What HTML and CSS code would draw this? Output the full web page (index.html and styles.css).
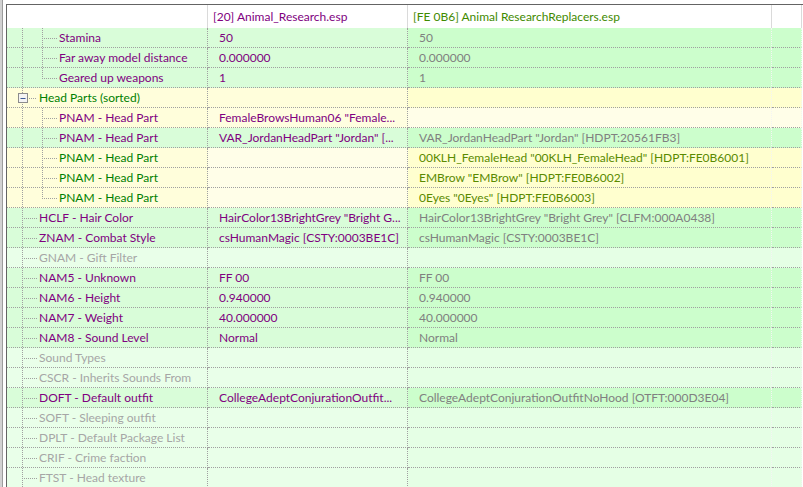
FILE: index.html
```html
<!DOCTYPE html>
<html lang="en">
<head>
<meta charset="UTF-8" />
<title>Record View</title>
<link rel="stylesheet" href="styles.css">
</head>
<body>
<!-- tree guide shapes -->
<svg class="defs" width="0" height="0">
  <symbol id="mid2" viewBox="0 0 52 20">
    <line x1="15.5" y1="0" x2="15.5" y2="20" />
    <line x1="35.5" y1="0" x2="35.5" y2="20" />
    <line x1="37" y1="10.5" x2="50" y2="10.5" />
  </symbol>
  <symbol id="end2" viewBox="0 0 52 20">
    <line x1="15.5" y1="0" x2="15.5" y2="20" />
    <line x1="35.5" y1="0" x2="35.5" y2="11" />
    <line x1="37" y1="10.5" x2="50" y2="10.5" />
  </symbol>
  <symbol id="mid1" viewBox="0 0 32 20">
    <line x1="15.5" y1="0" x2="15.5" y2="20" />
    <line x1="17" y1="10.5" x2="30" y2="10.5" />
  </symbol>
  <symbol id="open1" viewBox="0 0 32 20">
    <line x1="15.5" y1="0" x2="15.5" y2="20" />
    <line x1="22" y1="10.5" x2="30" y2="10.5" />
    <rect x="11.5" y="5.5" width="9" height="9" class="box" />
    <line x1="13.5" y1="10.5" x2="18.5" y2="10.5" class="minus" />
  </symbol>
</svg>

<div class="window">
  <div class="gutter"></div>
  <div class="view">
    <div class="row header">
      <div class="cell"></div>
      <div class="cell hd hd-master">[20] Animal_Research.esp</div>
      <div class="cell hd hd-over">[FE 0B6] Animal ResearchReplacers.esp</div>
      <div class="cell"></div>
    </div>

    <div class="row green">
      <div class="cell name purple"><svg class="tree t2"><use href="#mid2"/></svg>Stamina</div>
      <div class="cell val purple">50</div>
      <div class="cell val gray">50</div>
      <div class="cell"></div>
    </div>
    <div class="row green">
      <div class="cell name purple"><svg class="tree t2"><use href="#mid2"/></svg>Far away model distance</div>
      <div class="cell val purple">0.000000</div>
      <div class="cell val gray">0.000000</div>
      <div class="cell"></div>
    </div>
    <div class="row green">
      <div class="cell name purple"><svg class="tree t2"><use href="#end2"/></svg>Geared up weapons</div>
      <div class="cell val purple">1</div>
      <div class="cell val gray">1</div>
      <div class="cell"></div>
    </div>

    <div class="row yellow">
      <div class="cell name green-text"><svg class="tree t1"><use href="#open1"/></svg>Head Parts (sorted)</div>
      <div class="cell val"></div>
      <div class="cell val"></div>
      <div class="cell"></div>
    </div>
    <div class="row yellow-first">
      <div class="cell name purple"><svg class="tree t2"><use href="#mid2"/></svg>PNAM - Head Part</div>
      <div class="cell val purple">FemaleBrowsHuman06 "Female...</div>
      <div class="cell val"></div>
      <div class="cell"></div>
    </div>
    <div class="row green">
      <div class="cell name purple"><svg class="tree t2"><use href="#mid2"/></svg>PNAM - Head Part</div>
      <div class="cell val purple">VAR_JordanHeadPart "Jordan" [...</div>
      <div class="cell val gray">VAR_JordanHeadPart "Jordan" [HDPT:20561FB3]</div>
      <div class="cell"></div>
    </div>
    <div class="row yellow-new">
      <div class="cell name green-text"><svg class="tree t2"><use href="#mid2"/></svg>PNAM - Head Part</div>
      <div class="cell val"></div>
      <div class="cell val olive">00KLH_FemaleHead "00KLH_FemaleHead" [HDPT:FE0B6001]</div>
      <div class="cell"></div>
    </div>
    <div class="row yellow-new">
      <div class="cell name green-text"><svg class="tree t2"><use href="#mid2"/></svg>PNAM - Head Part</div>
      <div class="cell val"></div>
      <div class="cell val olive">EMBrow "EMBrow" [HDPT:FE0B6002]</div>
      <div class="cell"></div>
    </div>
    <div class="row yellow-new">
      <div class="cell name green-text"><svg class="tree t2"><use href="#end2"/></svg>PNAM - Head Part</div>
      <div class="cell val"></div>
      <div class="cell val olive">0Eyes "0Eyes" [HDPT:FE0B6003]</div>
      <div class="cell"></div>
    </div>

    <div class="row green">
      <div class="cell name purple"><svg class="tree t1"><use href="#mid1"/></svg>HCLF - Hair Color</div>
      <div class="cell val purple">HairColor13BrightGrey "Bright G...</div>
      <div class="cell val gray">HairColor13BrightGrey "Bright Grey" [CLFM:000A0438]</div>
      <div class="cell"></div>
    </div>
    <div class="row green">
      <div class="cell name purple"><svg class="tree t1"><use href="#mid1"/></svg>ZNAM - Combat Style</div>
      <div class="cell val purple">csHumanMagic [CSTY:0003BE1C]</div>
      <div class="cell val gray">csHumanMagic [CSTY:0003BE1C]</div>
      <div class="cell"></div>
    </div>
    <div class="row empty">
      <div class="cell name muted"><svg class="tree t1"><use href="#mid1"/></svg>GNAM - Gift Filter</div>
      <div class="cell val"></div>
      <div class="cell val"></div>
      <div class="cell"></div>
    </div>
    <div class="row green">
      <div class="cell name purple"><svg class="tree t1"><use href="#mid1"/></svg>NAM5 - Unknown</div>
      <div class="cell val purple">FF 00</div>
      <div class="cell val gray">FF 00</div>
      <div class="cell"></div>
    </div>
    <div class="row green">
      <div class="cell name purple"><svg class="tree t1"><use href="#mid1"/></svg>NAM6 - Height</div>
      <div class="cell val purple">0.940000</div>
      <div class="cell val gray">0.940000</div>
      <div class="cell"></div>
    </div>
    <div class="row green">
      <div class="cell name purple"><svg class="tree t1"><use href="#mid1"/></svg>NAM7 - Weight</div>
      <div class="cell val purple">40.000000</div>
      <div class="cell val gray">40.000000</div>
      <div class="cell"></div>
    </div>
    <div class="row green">
      <div class="cell name purple"><svg class="tree t1"><use href="#mid1"/></svg>NAM8 - Sound Level</div>
      <div class="cell val purple">Normal</div>
      <div class="cell val gray">Normal</div>
      <div class="cell"></div>
    </div>
    <div class="row empty">
      <div class="cell name muted"><svg class="tree t1"><use href="#mid1"/></svg>Sound Types</div>
      <div class="cell val"></div>
      <div class="cell val"></div>
      <div class="cell"></div>
    </div>
    <div class="row empty">
      <div class="cell name muted"><svg class="tree t1"><use href="#mid1"/></svg>CSCR - Inherits Sounds From</div>
      <div class="cell val"></div>
      <div class="cell val"></div>
      <div class="cell"></div>
    </div>
    <div class="row green">
      <div class="cell name purple"><svg class="tree t1"><use href="#mid1"/></svg>DOFT - Default outfit</div>
      <div class="cell val purple">CollegeAdeptConjurationOutfit...</div>
      <div class="cell val gray">CollegeAdeptConjurationOutfitNoHood [OTFT:000D3E04]</div>
      <div class="cell"></div>
    </div>
    <div class="row empty">
      <div class="cell name muted"><svg class="tree t1"><use href="#mid1"/></svg>SOFT - Sleeping outfit</div>
      <div class="cell val"></div>
      <div class="cell val"></div>
      <div class="cell"></div>
    </div>
    <div class="row empty">
      <div class="cell name muted"><svg class="tree t1"><use href="#mid1"/></svg>DPLT - Default Package List</div>
      <div class="cell val"></div>
      <div class="cell val"></div>
      <div class="cell"></div>
    </div>
    <div class="row empty">
      <div class="cell name muted"><svg class="tree t1"><use href="#mid1"/></svg>CRIF - Crime faction</div>
      <div class="cell val"></div>
      <div class="cell val"></div>
      <div class="cell"></div>
    </div>
    <div class="row empty">
      <div class="cell name muted"><svg class="tree t1"><use href="#mid1"/></svg>FTST - Head texture</div>
      <div class="cell val"></div>
      <div class="cell val"></div>
      <div class="cell"></div>
    </div>
  </div>
</div>
</body>
</html>
```

FILE: styles.css
```css
* {
  box-sizing: border-box;
  margin: 0;
  padding: 0;
}
body {
  background: #fff;
  width: 803px;
  height: 487px;
  overflow: hidden;
  font-family: 'Lato', 'Noto Sans', sans-serif;
  font-size: 12px;
}
.defs {
  position: absolute;
  width: 0;
  height: 0;
}
.defs line {
  stroke: #a0a0a0;
  stroke-width: 1;
  stroke-dasharray: 1 1;
}
.defs .box {
  fill: #f4f4f4;
  stroke: #8c8c8c;
  stroke-dasharray: none;
}
.defs .minus {
  stroke: #3d5a98;
  stroke-dasharray: none;
}
.window {
  display: flex;
  height: 487px;
}
.gutter {
  width: 3px;
  background: #d2d2d2;
  border-right: 1px solid #9c9c9c;
}
.view {
  flex: 1;
  margin-left: 3px;
  margin-top: 4px;
  border-left: 1px solid #646464;
  border-top: 1px solid #646464;
  overflow: hidden;
}
.row {
  display: grid;
  grid-template-columns: 201px 200px 364px 30px;
  height: 20px;
}
.cell {
  display: flex;
  align-items: center;
  white-space: nowrap;
  overflow: hidden;
  border-right: 1px dotted #a0a0a0;
  border-bottom: 1px dotted #a0a0a0;
}
.cell:nth-child(3),
.cell:nth-child(4) {
  border-right-color: #f4f4f4;
}
.val {
  padding-left: 11px;
}
.tree {
  flex: none;
  height: 20px;
  align-self: flex-start;
}
.tree.t2 {
  width: 52px;
}
.tree.t1 {
  width: 32px;
}

/* header */
.header {
  height: 23px;
  background: #fff;
}
.header .cell {
  border-bottom: none;
  border-right: 1px solid #dadada;
}
.hd {
  padding-left: 5px;
}
.hd-master {
  color: #800080;
}
.hd-over {
  color: #3f8a00;
}

/* text colours */
.purple { color: #800080; }
.gray { color: #808080; }
.muted { color: #a6a6a6; }
.green-text { color: #008000; }
.olive { color: #5a8a00; }

/* row backgrounds */
.green .cell { background: #d9fdd9; }
.green .cell:nth-child(3),
.green .cell:nth-child(4) { background: #ccfecc; }

.empty .cell { background: #e9ffe9; }
.empty .cell:nth-child(3),
.empty .cell:nth-child(4) { background: #e5ffe5; }

.yellow .cell { background: #fffedb; }
.yellow .cell:nth-child(3),
.yellow .cell:nth-child(4) { background: #ffffcf; }

.yellow-first .cell { background: #fffedb; }
.yellow-first .cell:nth-child(2) { background: #fffee0; }
.yellow-first .cell:nth-child(3),
.yellow-first .cell:nth-child(4) { background: #fffee8; }

.yellow-new .cell { background: #fffedb; }
.yellow-new .cell:nth-child(2) { background: #fffee8; }
.yellow-new .cell:nth-child(3),
.yellow-new .cell:nth-child(4) { background: #ffffcf; }
```
